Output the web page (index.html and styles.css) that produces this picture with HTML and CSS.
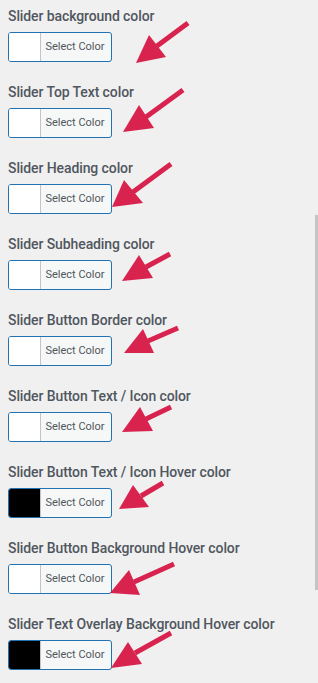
FILE: index.html
```html
<!DOCTYPE html>
<html lang="en">
<head>
    <meta charset="UTF-8">
    <meta name="viewport" content="width=device-width, initial-scale=1.0">
    <title>Slider colors</title>
    <link rel="stylesheet" href="styles.css">
</head>
<body>
    <div class="fields">
        <div class="field">
            <label>Slider background color</label>
            <button class="color-result"><span class="swatch"></span><span class="result-text">Select Color</span></button>
        </div>
        <div class="field">
            <label>Slider Top Text color</label>
            <button class="color-result"><span class="swatch"></span><span class="result-text">Select Color</span></button>
        </div>
        <div class="field">
            <label>Slider Heading color</label>
            <button class="color-result"><span class="swatch"></span><span class="result-text">Select Color</span></button>
        </div>
        <div class="field">
            <label>Slider Subheading color</label>
            <button class="color-result"><span class="swatch"></span><span class="result-text">Select Color</span></button>
        </div>
        <div class="field">
            <label>Slider Button Border color</label>
            <button class="color-result"><span class="swatch"></span><span class="result-text">Select Color</span></button>
        </div>
        <div class="field">
            <label>Slider Button Text / Icon color</label>
            <button class="color-result"><span class="swatch"></span><span class="result-text">Select Color</span></button>
        </div>
        <div class="field">
            <label>Slider Button Text / Icon Hover color</label>
            <button class="color-result"><span class="swatch dark"></span><span class="result-text">Select Color</span></button>
        </div>
        <div class="field">
            <label>Slider Button Background Hover color</label>
            <button class="color-result"><span class="swatch"></span><span class="result-text">Select Color</span></button>
        </div>
        <div class="field">
            <label>Slider Text Overlay Background Hover color</label>
            <button class="color-result"><span class="swatch dark"></span><span class="result-text">Select Color</span></button>
        </div>
    </div>

    <div class="scroll-thumb"></div>

    <!-- annotation arrows drawn over the screenshot -->
    <svg class="arrows" width="318" height="683" viewBox="0 0 318 683">
        <g fill="#d8234f" stroke="#d8234f" stroke-width="5" stroke-linecap="butt">
            <line x1="188" y1="23" x2="157" y2="46"/>
            <polygon stroke="none" points="136,63 149,35 166,57"/>

            <line x1="183" y1="90" x2="146" y2="117"/>
            <polygon stroke="none" points="123,132 139,105 154,128"/>

            <line x1="171" y1="164" x2="133" y2="192"/>
            <polygon stroke="none" points="112,207 124,180 143,203"/>

            <line x1="170" y1="254" x2="146" y2="267"/>
            <polygon stroke="none" points="122,281 139,255 153,278"/>

            <line x1="178" y1="328" x2="148" y2="341"/>
            <polygon stroke="none" points="124,353 143,329 154,353"/>

            <line x1="171" y1="407" x2="146" y2="419"/>
            <polygon stroke="none" points="122,432 140,407 153,431"/>

            <line x1="163" y1="483" x2="141" y2="496"/>
            <polygon stroke="none" points="119,509 133,485 149,507"/>

            <line x1="174" y1="564" x2="134" y2="582"/>
            <polygon stroke="none" points="110,593 129,570 140,595"/>

            <line x1="171" y1="633" x2="135" y2="653"/>
            <polygon stroke="none" points="111,668 128,642 142,664"/>
        </g>
    </svg>
</body>
</html>
```

FILE: styles.css
```css
body {
    margin: 0;
    background-color: #f0f0f1;
    font-family: Roboto, "Liberation Sans", Arial, sans-serif;
    color: #50575e;
    overflow: hidden;
}
.fields {
    display: flex;
    flex-direction: column;
    gap: 20px;
    padding: 6px 8px 0 8px;
}
.field label {
    display: block;
    font-size: 14px;
    font-weight: 500;
    line-height: 20px;
    letter-spacing: -0.1px;
    margin-bottom: 6px;
    white-space: nowrap;
}
.color-result {
    display: flex;
    align-items: stretch;
    width: 104px;
    height: 30px;
    padding: 0;
    border: 1px solid #2271b1;
    border-radius: 3px;
    background-color: #f6f7f7;
    overflow: hidden;
    cursor: pointer;
    font-family: inherit;
}
.swatch {
    width: 31px;
    background-color: #fff;
    border-right: 1px solid #c3c4c7;
}
.swatch.dark {
    background-color: #000;
}
.result-text {
    flex: 1;
    font-size: 11px;
    line-height: 28px;
    color: #50575e;
    text-align: center;
    padding-right: 2px;
}
.scroll-thumb {
    position: absolute;
    left: 315px;
    top: 215px;
    width: 3px;
    height: 375px;
    background-color: #c4c4c4;
}
.arrows {
    position: absolute;
    left: 0;
    top: 0;
    pointer-events: none;
}
```
